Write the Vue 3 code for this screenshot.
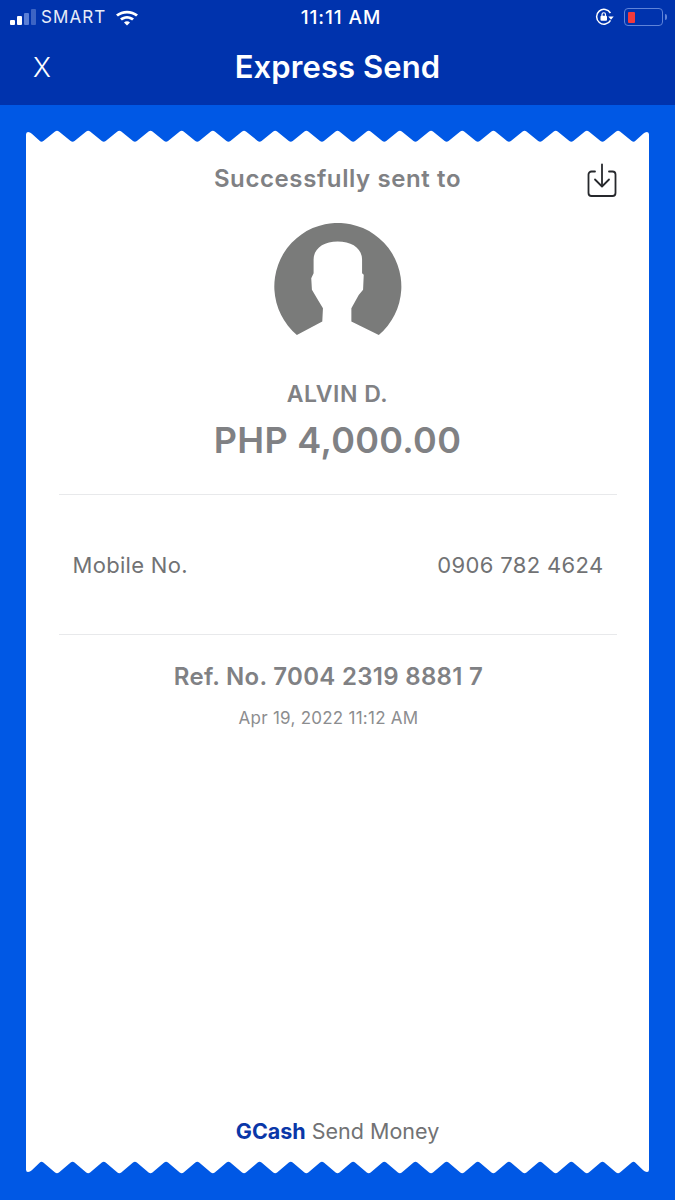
<template>
  <div class="screen">
    <header class="top">
      <div class="status">
        <div class="status-left">
          <div class="signal">
            <i class="on" style="height: 5px"></i>
            <i class="on" style="height: 9px"></i>
            <i class="mid" style="height: 12px"></i>
            <i style="height: 16px"></i>
          </div>
          <span class="carrier">SMART</span>
          <svg class="wifi" width="24" height="17" viewBox="0 0 24 17">
            <path d="M1 5.6C7.2.3 16.8.3 23 5.6l-1.900 2C16 3.300 8 3.300 2.900 7.600z" fill="#fff" />
            <path d="M5 9.6c4.200-3.500 9.800-3.500 14 0l-1.900 2c-3.100-2.500-7.100-2.500-10.200 0z" fill="#fff" />
            <path d="M9 13.400c1.800-1.400 4.200-1.400 6 0l-3 3.200z" fill="#fff" />
          </svg>
        </div>
        <span class="clock">11:11 AM</span>
        <div class="status-right">
          <svg width="20" height="18" viewBox="0 0 20 18" fill="none">
            <path d="M15.500 12.300A7.400 7.400 0 1 1 15.400 5" stroke="#fff" stroke-width="1.500" />
            <rect x="5.500" y="7.800" width="6.500" height="5" rx="1" fill="#fff" />
            <path d="M7 8V6.500a1.700 1.700 0 0 1 3.500 0V8" stroke="#fff" stroke-width="1.200" />
            <path d="M13.300 8.500h5.400l-2.700 3.200z" fill="#fff" />
          </svg>
          <div class="battery">
            <div class="battery-body"><div class="battery-level"></div></div>
            <div class="battery-cap"></div>
          </div>
        </div>
      </div>
      <div class="nav">
        <span class="close">X</span>
        <h1 class="title">Express Send</h1>
      </div>
    </header>

    <main class="content">
      <div class="receipt">
        <svg class="edge" width="623" height="14" viewBox="0 0 623 14">
          <path :d="topEdge" fill="#fff" />
        </svg>

        <div class="receipt-body">
          <div class="sent-row">
            <span class="sent-text">Successfully sent to</span>
            <svg class="save" width="30" height="34" viewBox="0 0 30 34" fill="none" stroke="#26282c" stroke-width="1.800" stroke-linecap="round" stroke-linejoin="round">
              <path d="M8 8.500H4.500a3 3 0 0 0-3 3V30a3 3 0 0 0 3 3h21a3 3 0 0 0 3-3V11.500a3 3 0 0 0-3-3H22" />
              <path d="M15 1.500V23" />
              <path d="M8 16.500 15 23.500l7-7" />
            </svg>
          </div>

          <svg class="avatar" width="128" height="113" viewBox="72 40 382 338">
            <path d="M140 375A190 190 0 1 1 385 375L303 335V295L325 255 338 240 340 195 335 190V150C335 115 305 95 262 95 220 95 190 115 190 150V190L183 205 185 240 200 265 218 295 216 335Z" fill="#7a7b7a" />
          </svg>

          <p class="name">ALVIN D.</p>
          <p class="amount">PHP 4,000.00</p>

          <div class="info-row">
            <span class="mobile">Mobile No.</span>
            <span class="number">0906 782 4624</span>
          </div>

          <p class="ref">Ref. No. 7004 2319 8881 7</p>
          <p class="date">Apr 19, 2022 11:12 AM</p>

          <p class="brand"><b>GCash</b> Send Money</p>
        </div>

        <svg class="edge" width="623" height="14" viewBox="0 0 623 14">
          <path :d="bottomEdge" fill="#fff" />
        </svg>
      </div>
    </main>
  </div>
</template>

<script setup>
// zigzag edges of the receipt, one tooth every 31.17px
const step = 31.17
const teeth = 19

// polyline with its corners rounded off
const rounded = (pts, r) => {
  let d = `M${pts[0][0]} ${pts[0][1]}`
  for (let i = 1; i < pts.length - 1; i++) {
    const [x, y] = pts[i]
    const [px, py] = pts[i - 1]
    const [nx, ny] = pts[i + 1]
    const inLen = Math.hypot(x - px, y - py)
    const outLen = Math.hypot(nx - x, ny - y)
    const a = Math.min(r, inLen / 2) / inLen
    const b = Math.min(r, outLen / 2) / outLen
    d += `L${x - (x - px) * a} ${y - (y - py) * a}`
    d += `Q${x} ${y} ${x + (nx - x) * b} ${y + (ny - y) * b}`
  }
  const last = pts[pts.length - 1]
  return `${d}L${last[0]} ${last[1]}Z`
}

const edgePoints = (tip, notch, cornerY, baseY) => {
  const pts = [[0, baseY], [0, cornerY], [4, cornerY]]
  for (let i = 0; i < teeth; i++) {
    const x = 31 + i * step
    pts.push([x - step / 2, notch], [x, tip])
  }
  pts.push([31 + (teeth - 1) * step + step / 2, notch], [619, cornerY], [623, cornerY], [623, baseY])
  return pts
}

const topEdge = rounded(edgePoints(0, 12.5, 2, 14), 2.5)
const bottomEdge = rounded(edgePoints(14, 1, 12, 0), 2.5)
</script>

<style scoped>
.screen {
  width: 675px;
  height: 1200px;
  display: flex;
  flex-direction: column;
  background: #0058e5;
  font-family: Inter, sans-serif;
  overflow: hidden;
}

.top {
  height: 105px;
  background: #0033ad;
  color: #fff;
  flex-shrink: 0;
}

.status {
  height: 34px;
  display: grid;
  grid-template-columns: 1fr auto 1fr;
  align-items: center;
}

.status-left {
  display: flex;
  align-items: center;
  padding-left: 10px;
}

.signal {
  display: flex;
  align-items: flex-end;
  gap: 2px;
  height: 16px;
}

.signal i {
  display: block;
  width: 5px;
  border-radius: 1px;
  background: #3c64c4;
}

.signal i.mid {
  background: #5a7fd6;
}

.signal i.on {
  background: #fff;
}

.carrier {
  margin-left: 5px;
  font-size: 17px;
  letter-spacing: 1.1px;
  color: #e6ecf8;
}

.wifi {
  margin-left: 9px;
}

.clock {
  margin-left: 7px;
  font-size: 19px;
  font-weight: 500;
  letter-spacing: 0.9px;
}

.status-right {
  display: flex;
  align-items: center;
  justify-content: flex-end;
  gap: 9px;
  padding-right: 8px;
}

.battery {
  display: flex;
  align-items: center;
  gap: 2px;
}

.battery-body {
  width: 39px;
  height: 18px;
  border: 1.500px solid #5f83d8;
  border-radius: 4px;
  padding: 2.500px 2.500px;
  box-sizing: border-box;
}

.battery-level {
  width: 7px;
  height: 100%;
  border-radius: 1px;
  background: #f23a3c;
}

.battery-cap {
  width: 2px;
  height: 6px;
  border-radius: 0 2px 2px 0;
  background: #5f83d8;
}

.nav {
  height: 67px;
  position: relative;
  display: flex;
  align-items: center;
  justify-content: center;
}

.close {
  position: absolute;
  left: 33px;
  font-size: 27px;
  font-weight: 300;
}

.title {
  margin: 0 0 2px;
  font-size: 31px;
  font-weight: 600;
  letter-spacing: 0.1px;
}

.content {
  flex: 1;
  padding: 25px 26px 26px;
  display: flex;
}

.receipt {
  width: 623px;
  display: flex;
  flex-direction: column;
}

.edge {
  display: block;
  flex-shrink: 0;
}

.receipt-body {
  flex: 1;
  background: #fff;
  display: flex;
  flex-direction: column;
  align-items: center;
  color: #808184;
}

.sent-row {
  width: 100%;
  height: 52px;
  display: flex;
  justify-content: center;
  align-items: center;
  position: relative;
  margin-top: 8px;
}

.sent-text {
  font-size: 24px;
  font-weight: 600;
  letter-spacing: 0.6px;
}

.save {
  position: absolute;
  right: 32px;
  top: 11px;
}

.avatar {
  margin-top: 19px;
}

.name {
  margin: 43px 0 0;
  font-size: 23px;
  font-weight: 600;
  line-height: 30px;
  letter-spacing: 0.5px;
}

.amount {
  margin: 8px 0 0;
  font-size: 36px;
  font-weight: 600;
  line-height: 46px;
  letter-spacing: 0.3px;
}

.info-row {
  width: 558px;
  height: 141px;
  margin-top: 31px;
  padding: 0 13px 0 14px;
  box-sizing: border-box;
  display: flex;
  justify-content: space-between;
  align-items: center;
  border-top: 1px solid #e8e9eb;
  border-bottom: 1px solid #e8e9eb;
  font-size: 22px;
  color: #717274;
}

.mobile {
  letter-spacing: 0.3px;
}

.number {
  letter-spacing: 0.35px;
}

.ref {
  margin: 25px 18px 0 0;
  font-size: 24px;
  font-weight: 600;
  line-height: 34px;
  letter-spacing: 0.3px;
}

.date {
  margin: 12px 18px 0 0;
  font-size: 17px;
  line-height: 24px;
  letter-spacing: 0.25px;
  color: #8c8d8f;
}

.brand {
  margin: auto 0 14px;
  font-size: 21.5px;
  line-height: 30px;
  color: #717274;
}

.brand b {
  color: #0a37a8;
  font-weight: 700;
}
</style>
